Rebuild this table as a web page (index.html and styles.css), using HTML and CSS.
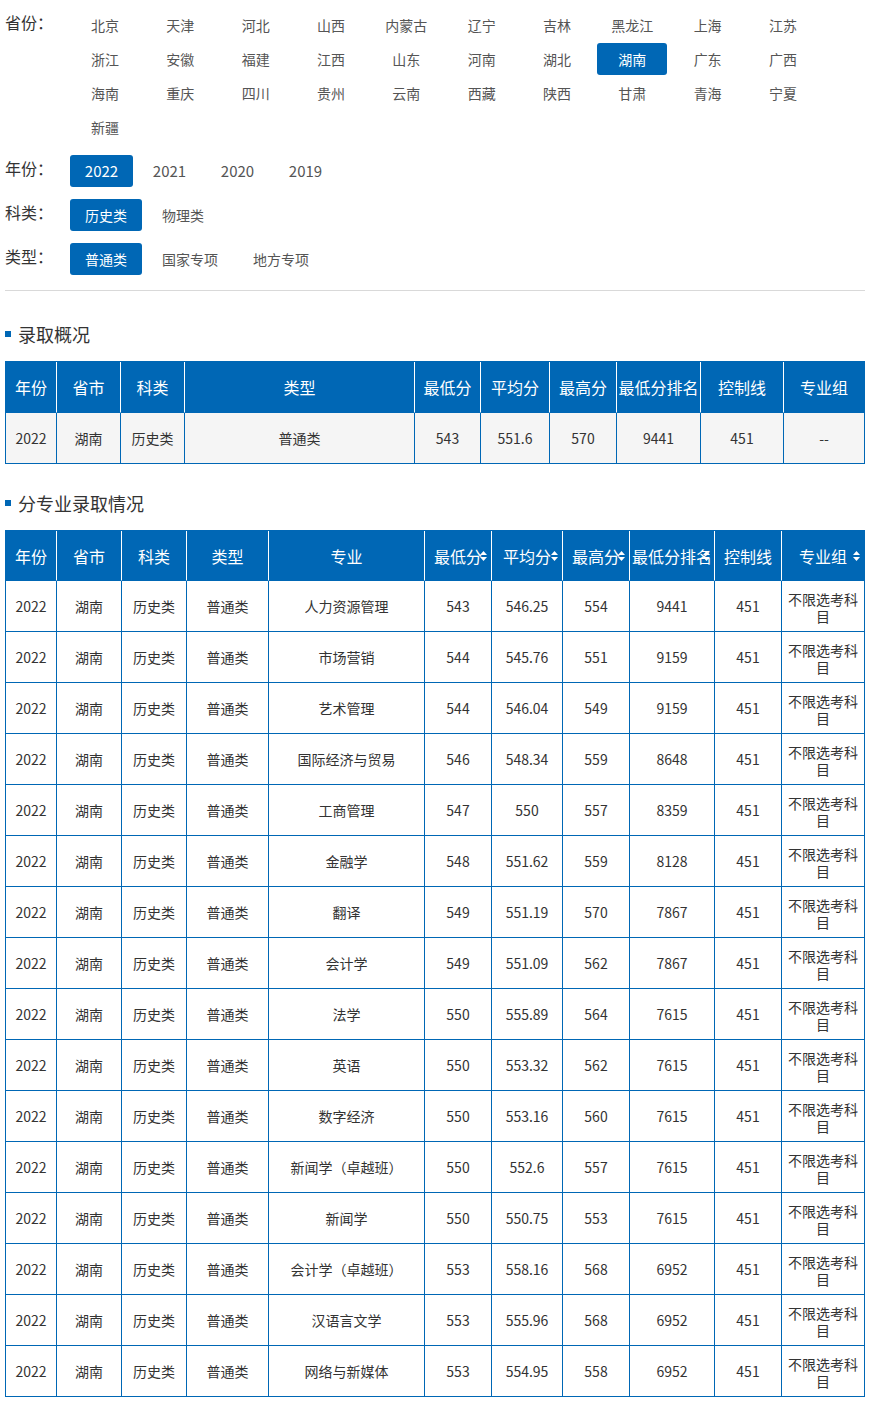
FILE: index.html
```html
<!DOCTYPE html>
<html lang="zh-CN">
<head>
<meta charset="utf-8">
<title>录取分数</title>
<link rel="stylesheet" href="styles.css">
</head>
<body>
<div class="page">
  <div class="frow">
    <div class="flabel">省份<span class="colon">：</span></div>
    <div class="provinces">
      <span class="opt">北京</span><span class="opt">天津</span><span class="opt">河北</span><span class="opt">山西</span><span class="opt">内蒙古</span><span class="opt">辽宁</span><span class="opt">吉林</span><span class="opt">黑龙江</span><span class="opt">上海</span><span class="opt">江苏</span>
      <span class="opt">浙江</span><span class="opt">安徽</span><span class="opt">福建</span><span class="opt">江西</span><span class="opt">山东</span><span class="opt">河南</span><span class="opt">湖北</span><span class="opt active">湖南</span><span class="opt">广东</span><span class="opt">广西</span>
      <span class="opt">海南</span><span class="opt">重庆</span><span class="opt">四川</span><span class="opt">贵州</span><span class="opt">云南</span><span class="opt">西藏</span><span class="opt">陕西</span><span class="opt">甘肃</span><span class="opt">青海</span><span class="opt">宁夏</span>
      <span class="opt">新疆</span>
    </div>
  </div>
  <div class="frow">
    <div class="flabel">年份<span class="colon">：</span></div>
    <div class="opts">
      <span class="opt year active">2022</span><span class="opt year">2021</span><span class="opt year">2020</span><span class="opt year">2019</span>
    </div>
  </div>
  <div class="frow">
    <div class="flabel">科类<span class="colon">：</span></div>
    <div class="opts">
      <span class="opt wide active">历史类</span><span class="opt wide">物理类</span>
    </div>
  </div>
  <div class="frow">
    <div class="flabel">类型<span class="colon">：</span></div>
    <div class="opts">
      <span class="opt wide active">普通类</span><span class="opt wide">国家专项</span><span class="opt wide">地方专项</span>
    </div>
  </div>
  <div class="divider"></div>

  <h2 class="stitle first"><span class="mark"></span>录取概况</h2>
  <table class="tbl t1">
    <colgroup><col><col><col><col><col><col><col><col><col><col></colgroup>
    <thead>
      <tr><th>年份</th><th>省市</th><th>科类</th><th>类型</th><th>最低分</th><th>平均分</th><th>最高分</th><th>最低分排名</th><th>控制线</th><th>专业组</th></tr>
    </thead>
    <tbody>
      <tr><td>2022</td><td>湖南</td><td>历史类</td><td>普通类</td><td>543</td><td>551.6</td><td>570</td><td>9441</td><td>451</td><td>--</td></tr>
    </tbody>
  </table>

  <h2 class="stitle"><span class="mark"></span>分专业录取情况</h2>
  <table class="tbl t2">
    <colgroup><col><col><col><col><col><col><col><col><col><col><col></colgroup>
    <thead>
      <tr><th>年份</th><th>省市</th><th>科类</th><th>类型</th><th>专业</th>
        <th class="sortable">最低分<svg class="sort" width="7" height="10" viewBox="0 0 7 10"><polygon points="0,4 3.5,0 7,4" fill="#fff"/><polygon points="0,6 7,6 3.5,10" fill="#fff"/></svg></th>
        <th class="sortable">平均分<svg class="sort" width="7" height="10" viewBox="0 0 7 10"><polygon points="0,4 3.5,0 7,4" fill="#fff"/><polygon points="0,6 7,6 3.5,10" fill="#fff"/></svg></th>
        <th class="sortable">最高分<svg class="sort" width="7" height="10" viewBox="0 0 7 10"><polygon points="0,4 3.5,0 7,4" fill="#fff"/><polygon points="0,6 7,6 3.5,10" fill="#fff"/></svg></th>
        <th class="sortable">最低分排名<svg class="sort" width="7" height="10" viewBox="0 0 7 10"><polygon points="0,4 3.5,0 7,4" fill="#fff"/><polygon points="0,6 7,6 3.5,10" fill="#fff"/></svg></th>
        <th>控制线</th>
        <th class="sortable">专业组<svg class="sort" width="7" height="10" viewBox="0 0 7 10"><polygon points="0,4 3.5,0 7,4" fill="#fff"/><polygon points="0,6 7,6 3.5,10" fill="#fff"/></svg></th>
      </tr>
    </thead>
    <tbody>
      <tr><td>2022</td><td>湖南</td><td>历史类</td><td>普通类</td><td>人力资源管理</td><td>543</td><td>546.25</td><td>554</td><td>9441</td><td>451</td><td class="grp">不限选考科目</td></tr>
      <tr><td>2022</td><td>湖南</td><td>历史类</td><td>普通类</td><td>市场营销</td><td>544</td><td>545.76</td><td>551</td><td>9159</td><td>451</td><td class="grp">不限选考科目</td></tr>
      <tr><td>2022</td><td>湖南</td><td>历史类</td><td>普通类</td><td>艺术管理</td><td>544</td><td>546.04</td><td>549</td><td>9159</td><td>451</td><td class="grp">不限选考科目</td></tr>
      <tr><td>2022</td><td>湖南</td><td>历史类</td><td>普通类</td><td>国际经济与贸易</td><td>546</td><td>548.34</td><td>559</td><td>8648</td><td>451</td><td class="grp">不限选考科目</td></tr>
      <tr><td>2022</td><td>湖南</td><td>历史类</td><td>普通类</td><td>工商管理</td><td>547</td><td>550</td><td>557</td><td>8359</td><td>451</td><td class="grp">不限选考科目</td></tr>
      <tr><td>2022</td><td>湖南</td><td>历史类</td><td>普通类</td><td>金融学</td><td>548</td><td>551.62</td><td>559</td><td>8128</td><td>451</td><td class="grp">不限选考科目</td></tr>
      <tr><td>2022</td><td>湖南</td><td>历史类</td><td>普通类</td><td>翻译</td><td>549</td><td>551.19</td><td>570</td><td>7867</td><td>451</td><td class="grp">不限选考科目</td></tr>
      <tr><td>2022</td><td>湖南</td><td>历史类</td><td>普通类</td><td>会计学</td><td>549</td><td>551.09</td><td>562</td><td>7867</td><td>451</td><td class="grp">不限选考科目</td></tr>
      <tr><td>2022</td><td>湖南</td><td>历史类</td><td>普通类</td><td>法学</td><td>550</td><td>555.89</td><td>564</td><td>7615</td><td>451</td><td class="grp">不限选考科目</td></tr>
      <tr><td>2022</td><td>湖南</td><td>历史类</td><td>普通类</td><td>英语</td><td>550</td><td>553.32</td><td>562</td><td>7615</td><td>451</td><td class="grp">不限选考科目</td></tr>
      <tr><td>2022</td><td>湖南</td><td>历史类</td><td>普通类</td><td>数字经济</td><td>550</td><td>553.16</td><td>560</td><td>7615</td><td>451</td><td class="grp">不限选考科目</td></tr>
      <tr><td>2022</td><td>湖南</td><td>历史类</td><td>普通类</td><td>新闻学<span class="paren">（</span>卓越班<span class="paren">）</span></td><td>550</td><td>552.6</td><td>557</td><td>7615</td><td>451</td><td class="grp">不限选考科目</td></tr>
      <tr><td>2022</td><td>湖南</td><td>历史类</td><td>普通类</td><td>新闻学</td><td>550</td><td>550.75</td><td>553</td><td>7615</td><td>451</td><td class="grp">不限选考科目</td></tr>
      <tr><td>2022</td><td>湖南</td><td>历史类</td><td>普通类</td><td>会计学<span class="paren">（</span>卓越班<span class="paren">）</span></td><td>553</td><td>558.16</td><td>568</td><td>6952</td><td>451</td><td class="grp">不限选考科目</td></tr>
      <tr><td>2022</td><td>湖南</td><td>历史类</td><td>普通类</td><td>汉语言文学</td><td>553</td><td>555.96</td><td>568</td><td>6952</td><td>451</td><td class="grp">不限选考科目</td></tr>
      <tr><td>2022</td><td>湖南</td><td>历史类</td><td>普通类</td><td>网络与新媒体</td><td>553</td><td>554.95</td><td>558</td><td>6952</td><td>451</td><td class="grp">不限选考科目</td></tr>
    </tbody>
  </table>
</div>
</body>
</html>
```

FILE: styles.css
```css
html, body {
  margin: 0;
  padding: 0;
  background: #fff;
}
body {
  font-family: "Noto Sans CJK SC", "Noto Sans", sans-serif;
  color: #333;
  font-size: 14px;
}
.page {
  width: 860px;
  padding: 9px 4px 0 5px;
}
.frow {
  display: flex;
  align-items: flex-start;
  margin-bottom: 12px;
}
.flabel {
  width: 65px;
  flex: none;
  font-size: 16px;
  line-height: 26px;
  color: #333;
  white-space: nowrap;
}
.colon,
.paren {
  font-family: "Noto Sans CJK TC", "Noto Sans CJK SC", sans-serif;
}
.provinces {
  display: grid;
  grid-template-columns: repeat(10, 70px);
  column-gap: 5.333px;
  row-gap: 2px;
  grid-auto-rows: 32px;
}
.opts {
  display: flex;
  gap: 5px;
}
.opt {
  display: block;
  height: 32px;
  line-height: 32px;
  text-align: center;
  font-size: 14px;
  color: #555;
  border-radius: 3px;
  white-space: nowrap;
}
.provinces .opt {
  width: 70px;
}
.opt.year {
  width: 63px;
  font-size: 15px;
}
.opt.wide {
  min-width: 70px;
  padding: 0 15px;
  box-sizing: border-box;
}
.opt.active {
  background: #0067b5;
  color: #fff;
}
.divider {
  height: 1px;
  background: #d9d9d9;
  margin-top: 15px;
}
.stitle {
  display: flex;
  align-items: center;
  gap: 7px;
  margin: 27px 0 15px;
  height: 24px;
  font-size: 18px;
  font-weight: normal;
  color: #333;
  line-height: 24px;
}
.stitle.first {
  margin-top: 31px;
}
.mark {
  width: 6px;
  height: 6px;
  background: #0067b5;
  flex: none;
}
.tbl {
  width: 860px;
  box-sizing: border-box;
  table-layout: fixed;
  border-collapse: separate;
  border-spacing: 0;
  border-top: 1px solid #0067b5;
  border-left: 1px solid #0067b5;
}
.tbl th, .tbl td {
  padding: 0;
  text-align: center;
  vertical-align: middle;
  border-right: 1px solid #0067b5;
  border-bottom: 1px solid #0067b5;
}
.tbl th {
  background: #0067b5;
  color: #fff;
  font-size: 16px;
  font-weight: normal;
  border-right-color: #fff;
  white-space: nowrap;
  position: relative;
}
.tbl th:last-child {
  border-right-color: #0067b5;
}
.tbl td {
  font-size: 14px;
  color: #333;
  line-height: 17px;
}
.t1 thead tr { height: 51px; }
.t1 tbody tr { height: 51px; }
.t1 td { background: #f5f5f5; }
.t2 thead tr { height: 50px; }
.t2 tbody tr { height: 51px; }
.t2 td.grp {
  padding: 4px 5px 0;
}
.sort {
  position: absolute;
  right: 4px;
  top: 50%;
  margin-top: -5px;
}
.t1 col:nth-child(1) { width: 51px; }
.t1 col:nth-child(2) { width: 64px; }
.t1 col:nth-child(3) { width: 64px; }
.t1 col:nth-child(4) { width: 230px; }
.t1 col:nth-child(5) { width: 66px; }
.t1 col:nth-child(6) { width: 69px; }
.t1 col:nth-child(7) { width: 67px; }
.t1 col:nth-child(8) { width: 84px; }
.t1 col:nth-child(9) { width: 83px; }
.t1 col:nth-child(10) { width: 81px; }
.t2 col:nth-child(1) { width: 51px; }
.t2 col:nth-child(2) { width: 65px; }
.t2 col:nth-child(3) { width: 65px; }
.t2 col:nth-child(4) { width: 82px; }
.t2 col:nth-child(5) { width: 156px; }
.t2 col:nth-child(6) { width: 67px; }
.t2 col:nth-child(7) { width: 71px; }
.t2 col:nth-child(8) { width: 67px; }
.t2 col:nth-child(9) { width: 85px; }
.t2 col:nth-child(10) { width: 67px; }
.t2 col:nth-child(11) { width: 83px; }
```
